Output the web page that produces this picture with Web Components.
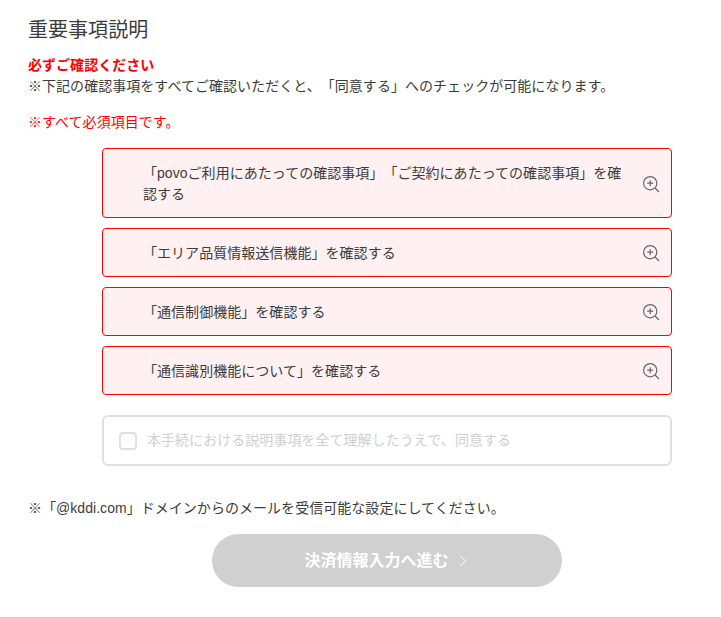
<!DOCTYPE html>
<html lang="ja">
<head>
	<meta charset="utf-8">
	<meta name="viewport" content="width=device-width, initial-scale=1">
	<title>重要事項説明</title>
	<style>
		body {
			margin: 0;
			background: #fff;
			color: #3c3c3c;
			font: 14px/21px "Liberation Sans", "Noto Sans CJK JP", sans-serif;
			letter-spacing: .04px;
			text-spacing-trim: space-all;
		}
	</style>
</head>
<body>
	<important-matters></important-matters>
	<script>
	customElements.define('confirm-item', class extends HTMLElement {
		connectedCallback() {
			this.attachShadow({mode: 'open'});
			this.shadowRoot.innerHTML = `
				<style>
					:host {
						display: flex;
						align-items: center;
						justify-content: space-between;
						box-sizing: border-box;
						padding: 14px 11px 12px 40px;
						border: 1px solid #f00;
						border-radius: 4px;
						background: #fff1f1;
						cursor: pointer;
					}
					.label {
						width: 486px;
					}
					svg {
						display: block;
						flex: none;
					}
				</style>
				<span class="label"><slot></slot></span>
				<svg width="17" height="17" viewBox="0 0 17 17" fill="none" stroke="#666" stroke-width="1.2">
					<circle cx="7.2" cy="7.2" r="6.6"/>
					<path d="M7.2 4.2v6M4.2 7.2h6M12 12l4 4"/>
				</svg>
			`;
		}
	});

	customElements.define('agree-check', class extends HTMLElement {
		connectedCallback() {
			this.attachShadow({mode: 'open'});
			this.shadowRoot.innerHTML = `
				<style>
					:host {
						display: flex;
						align-items: center;
						box-sizing: border-box;
						height: 51px;
						padding: 0 15px;
						border: 2px solid #e0e0e0;
						border-radius: 6px;
						color: #d0d0d0;
					}
					.box {
						box-sizing: border-box;
						width: 18px;
						height: 18px;
						margin-right: 10px;
						border: 2px solid #e0e0e0;
						border-radius: 4px;
					}
				</style>
				<span class="box"></span>
				<span><slot></slot></span>
			`;
		}
	});

	customElements.define('next-button', class extends HTMLElement {
		connectedCallback() {
			this.attachShadow({mode: 'open'});
			this.shadowRoot.innerHTML = `
				<style>
					:host {
						display: block;
					}
					button {
						display: flex;
						align-items: center;
						justify-content: center;
						gap: 10px;
						width: 350px;
						height: 53px;
						padding: 0 3px 0 0;
						border: 0;
						border-radius: 27px;
						background: #d0d0d0;
						color: #fff;
						font: bold 16px/24px "Liberation Sans", "Noto Sans CJK JP", sans-serif;
					}
				</style>
				<button type="button" disabled>
					<slot></slot>
					<svg width="8" height="12" viewBox="0 0 8 12" fill="none" stroke="#fff" stroke-width="1">
						<path d="M1 .7l5.6 5.3L1 11.3"/>
					</svg>
				</button>
			`;
		}
	});

	customElements.define('important-matters', class extends HTMLElement {
		connectedCallback() {
			this.attachShadow({mode: 'open'});
			this.shadowRoot.innerHTML = `
				<style>
					:host {
						display: block;
						padding: 15px 49px 30px 28px;
					}
					h2 {
						margin: 0 0 10px;
						font-size: 20px;
						font-weight: normal;
						line-height: 30px;
					}
					p {
						margin: 0;
					}
					.strong {
						color: #f00;
						font-weight: bold;
					}
					.required {
						margin: 15px 0;
						color: #f00;
					}
					.list {
						display: grid;
						gap: 10px;
						margin-left: 74px;
					}
					agree-check {
						margin: 20px 0 0 74px;
					}
					.mail {
						margin: 32px 0 15px;
					}
					next-button {
						margin-left: 184px;
					}
				</style>
				<h2>重要事項説明</h2>
				<p class="strong">必ずご確認ください</p>
				<p>※下記の確認事項をすべてご確認いただくと、「同意する」へのチェックが可能になります。</p>
				<p class="required">※すべて必須項目です。</p>
				<div class="list">
					<confirm-item>「povoご利用にあたっての確認事項」「ご契約にあたっての確認事項」を確認する</confirm-item>
					<confirm-item>「エリア品質情報送信機能」を確認する</confirm-item>
					<confirm-item>「通信制御機能」を確認する</confirm-item>
					<confirm-item>「通信識別機能について」を確認する</confirm-item>
				</div>
				<agree-check>本手続における説明事項を全て理解したうえで、同意する</agree-check>
				<p class="mail">※「@kddi.com」ドメインからのメールを受信可能な設定にしてください。</p>
				<next-button>決済情報入力へ進む</next-button>
			`;
		}
	});
	</script>
</body>
</html>
